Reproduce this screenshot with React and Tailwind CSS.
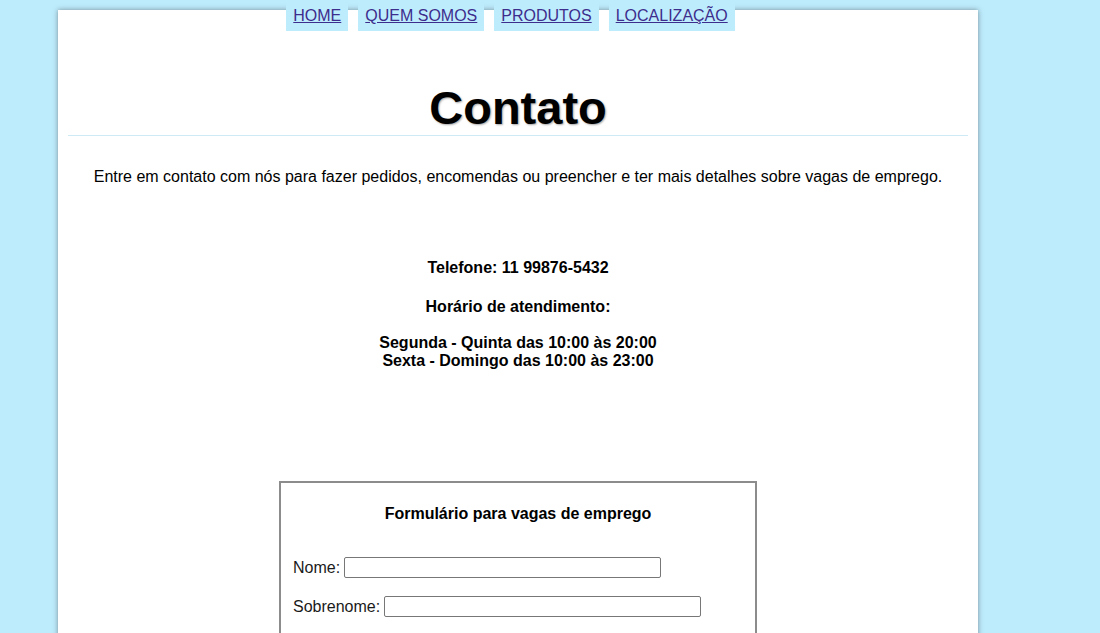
import React from "react";

export default function App() {
  const navItems = ["HOME", "QUEM SOMOS", "PRODUTOS", "LOCALIZAÇÃO"];
  return (
    <div
      className="flow-root min-h-[633px] bg-[#bdecfd] pt-[10px] pb-10 text-black"
      style={{ fontFamily: '"Liberation Sans", Arial, sans-serif' }}
    >
      <div className="flow-root ml-[58px] w-[920px] bg-white px-[10px] pb-10 shadow-[0_0_5px_rgba(60,60,60,0.55)]">
        <nav className="-mt-[10px] flex justify-center gap-[10px] pr-[15px]">
          {navItems.map((item) => (
            <a
              key={item}
              href="#"
              className="block bg-[#bdecfd] px-[7px] pt-[7px] pb-[6px] text-[16px] leading-[18px] text-[#3d2d8c] underline"
            >
              {item}
            </a>
          ))}
        </nav>

        <h1
          className="mt-[50px] border-b border-[#cdeaf5] text-center text-[47px] font-bold leading-[54px]"
          style={{ textShadow: "1px 1px 2px rgba(0,0,0,0.35)" }}
        >
          Contato
        </h1>

        <p className="mt-[32px] text-center text-[16px] leading-[18px]">
          Entre em contato com nós para fazer pedidos, encomendas ou preencher e ter mais detalhes sobre vagas de emprego.
        </p>

        <div className="mt-[73px] text-center text-[16px] font-bold leading-[18px]">
          <p>Telefone: 11 99876-5432</p>
          <p className="mt-[21px]">Horário de atendimento:</p>
          <p className="mt-[18px]">Segunda - Quinta das 10:00 às 20:00</p>
          <p>Sexta - Domingo das 10:00 às 23:00</p>
        </div>

        <div className="ml-[211px] mt-[111px] w-[478px] border-2 border-[#8c8c8c] px-[12px] pt-[22px] pb-[60px] text-[16px] leading-[18px]">
          <h2 className="text-center font-bold">Formulário para vagas de emprego</h2>
          <div className="mt-[34px] flex items-center gap-[4px]">
            <label className="text-[#1a1a1a]">Nome:</label>
            <input className="h-[21px] w-[317px] rounded-[2px] border border-[#777] bg-white" />
          </div>
          <div className="mt-[18px] flex items-center gap-[4px]">
            <label className="text-[#1a1a1a]">Sobrenome:</label>
            <input className="h-[21px] w-[317px] rounded-[2px] border border-[#777] bg-white" />
          </div>
        </div>
      </div>
    </div>
  );
}
